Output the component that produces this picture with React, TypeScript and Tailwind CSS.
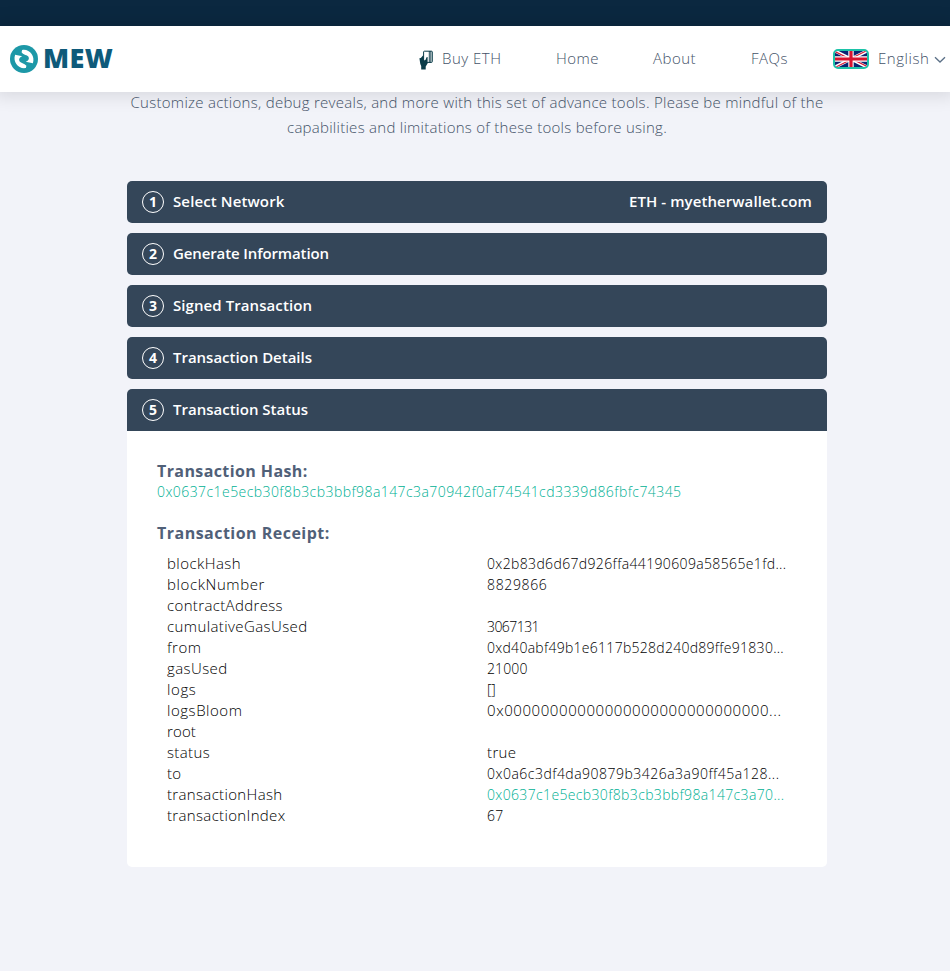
type Row = { label: string; labelTracking: string; value: string; valueStyle?: string };

const rows: Row[] = [
  { label: "blockHash", labelTracking: "tracking-[0.436px]", value: "0x2b83d6d67d926ffa44190609a58565e1fd...", valueStyle: "tracking-[0.357px]" },
  { label: "blockNumber", labelTracking: "tracking-[0.6px]", value: "8829866", valueStyle: "tracking-[0.65px]" },
  { label: "contractAddress", labelTracking: "tracking-[0.355px]", value: "" },
  { label: "cumulativeGasUsed", labelTracking: "tracking-[0.4px]", value: "3067131", valueStyle: "tracking-[-0.565px]" },
  { label: "from", labelTracking: "tracking-[0.53px]", value: "0xd40abf49b1e6117b528d240d89ffe91830...", valueStyle: "tracking-[0.277px]" },
  { label: "gasUsed", labelTracking: "tracking-[0.41px]", value: "21000", valueStyle: "tracking-[0.106px]" },
  { label: "logs", labelTracking: "tracking-[0.62px]", value: "[]", valueStyle: "tracking-[-0.219px]" },
  { label: "logsBloom", labelTracking: "tracking-[0.54px]", value: "0x00000000000000000000000000000...", valueStyle: "text-[15px] tracking-[0.574px]" },
  { label: "root", labelTracking: "tracking-[0.125px]", value: "" },
  { label: "status", labelTracking: "tracking-[0.365px]", value: "true", valueStyle: "text-[15px] tracking-[0.38px]" },
  { label: "to", labelTracking: "tracking-[0.34px]", value: "0x0a6c3df4da90879b3426a3a90ff45a128...", valueStyle: "tracking-[0.483px]" },
  { label: "transactionHash", labelTracking: "tracking-[0.34px]", value: "0x0637c1e5ecb30f8b3cb3bbf98a147c3a70...", valueStyle: "tracking-[0.354px] text-[#00b094]" },
  { label: "transactionIndex", labelTracking: "tracking-[0.34px]", value: "67", valueStyle: "tracking-[0.258px]" },
];

const steps = [
  { title: "Select Network", tracking: "tracking-[0.12px]", aside: "ETH - myetherwallet.com" },
  { title: "Generate Information", tracking: "tracking-[-0.12px]" },
  { title: "Signed Transaction", tracking: "tracking-[0.08px]" },
  { title: "Transaction Details", tracking: "tracking-[-0.015px]" },
  { title: "Transaction Status", tracking: "tracking-[0px]" },
];

function LogoMark() {
  const swoosh = "M30 17 C50 8 73 24 71 48 L49 49 C56 45 58 38 54 33 C49 27 38 31 30 24 Z";
  return (
    <svg viewBox="0 0 84 84" className="size-7 shrink-0">
      <circle cx="42" cy="42" r="42" fill="#1d98a7" />
      <path d={swoosh} fill="#fff" transform="rotate(14 42 42)" />
      <path d={swoosh} fill="#fff" transform="rotate(194 42 42)" />
    </svg>
  );
}

function HandCard() {
  return (
    <svg viewBox="0 0 14 20" className="mt-[2px] h-5 w-3.5 shrink-0">
      <rect x="4.6" y="1.2" width="8.7" height="11.2" rx="0.8" fill="#fff" stroke="#0b3c49" strokeWidth="1" />
      <path d="M10.3 1v11.6M11.8 1v11.6" stroke="#0b3c49" strokeWidth="0.9" />
      <path
        d="M4.2 5.2 L1.8 8 L0.4 8.2 L1.3 14 L2.2 16 V19.5 H6.7 V16.6 L8.6 13.6 V7.4 C8.6 6.8 7.6 6.8 7.4 7.5 L6.6 9.8 L5 10.4 Z"
        fill="#0b3c49"
      />
    </svg>
  );
}

function UnionJack() {
  return (
    <svg viewBox="0 0 32 16" preserveAspectRatio="none" className="h-4 w-8">
      <rect width="32" height="16" fill="#0a2472" />
      <path d="M0 0L32 16M32 0L0 16" stroke="#fff" strokeWidth="3.2" />
      <path d="M0 0.6L14 7.6M32 15.4L18 8.4M31.4 -0.2L18 6.6M0.6 16.2L14 9.4" stroke="#d8142f" strokeWidth="1.1" />
      <path d="M16 0V16M0 8H32" stroke="#fff" strokeWidth="5.4" />
      <path d="M16 0V16M0 8H32" stroke="#d8142f" strokeWidth="3.2" />
    </svg>
  );
}

export default function App() {
  return (
    <div className="min-h-[971px] w-full overflow-hidden bg-[#f2f3f9] font-['Open_Sans',sans-serif] text-[15px] font-light text-[#435268]">
      <div className="h-[26px] bg-[#0b2840]" />
      <header className="relative z-10 flex h-[66px] items-center bg-white pl-[10px] shadow-[0_0_16px_5px_rgba(0,0,0,0.1)]">
        <LogoMark />
        <div className="ml-[5px] flex w-[376px] items-center pb-[2px] text-[27px] leading-[32px] font-extrabold text-[#0e5a7a]">
          <span className="tracking-[0.4px]">MEW</span>
        </div>
        <HandCard />
        <nav className="ml-[9px] flex items-center pb-[2px] leading-[21px] whitespace-nowrap">
          <a className="w-[114px] tracking-[0.5px]">Buy ETH</a>
          <a className="w-[97px] tracking-[0.5px]">Home</a>
          <a className="w-[98px] tracking-[0.5px]">About</a>
          <a className="w-[82px] tracking-[0.5px]">FAQs</a>
        </nav>
        <div className="overflow-hidden rounded-[5px] border-2 border-[#1cc3a8]">
          <UnionJack />
        </div>
        <span className="ml-[9px] w-[56px] pb-[2px] leading-[21px] tracking-[0.55px]">English</span>
        <svg viewBox="0 0 12 8" className="mt-[2px] h-2 w-3 shrink-0" fill="none">
          <path d="M1 1.2L6 6L11 1.2" stroke="#5b7087" strokeWidth="1.3" />
        </svg>
      </header>

      <main className="ml-[127px] w-[700px]">
        <p className="-mt-[2px] text-center leading-[25px] whitespace-nowrap">
          <span className="block tracking-[0.277px]">
            Customize actions, debug reveals, and more with this set of advance tools. Please be mindful of the
          </span>
          <span className="block tracking-[0.268px]">capabilities and limitations of these tools before using.</span>
        </p>

        <div className="mt-[41px] flex flex-col gap-[10px]">
          {steps.map((step, i) => (
            <div
              key={step.title}
              className={`flex h-[42px] items-center bg-[#344659] px-[15px] leading-[21px] font-semibold text-white ${
                i === steps.length - 1 ? "rounded-t-[5px]" : "rounded-[5px]"
              }`}
            >
              <span className="flex size-[22px] items-center justify-center rounded-full border border-white text-[14px] leading-[20px] font-bold">
                {i + 1}
              </span>
              <span className={`ml-[9px] pb-[2px] ${step.tracking}`}>{step.title}</span>
              {step.aside && <span className="ml-auto pb-[2px] tracking-[0.08px]">{step.aside}</span>}
            </div>
          ))}
        </div>

        <section className="rounded-b-[5px] bg-white px-[30px] pt-[30px] pb-[41px] text-[14px] leading-[21px]">
          <h3 className="text-[16px] leading-[20px] font-bold tracking-[0.4px] text-[#506078]">Transaction Hash:</h3>
          <p className="tracking-[0.431px] text-[#00b094]">
            0x0637c1e5ecb30f8b3cb3bbf98a147c3a70942f0af74541cd3339d86fbfc74345
          </p>
          <h3 className="mt-[21px] text-[16px] leading-[20px] font-bold tracking-[0.48px] text-[#506078]">
            Transaction Receipt:
          </h3>
          <ul className="mt-[10px] px-[10px]">
            {rows.map((row) => (
              <li key={row.label} className="flex h-[21px] text-black">
                <span className={`w-[320px] text-[15px] ${row.labelTracking}`}>{row.label}</span>
                <span className={row.valueStyle}>{row.value}</span>
              </li>
            ))}
          </ul>
        </section>
      </main>
    </div>
  );
}
